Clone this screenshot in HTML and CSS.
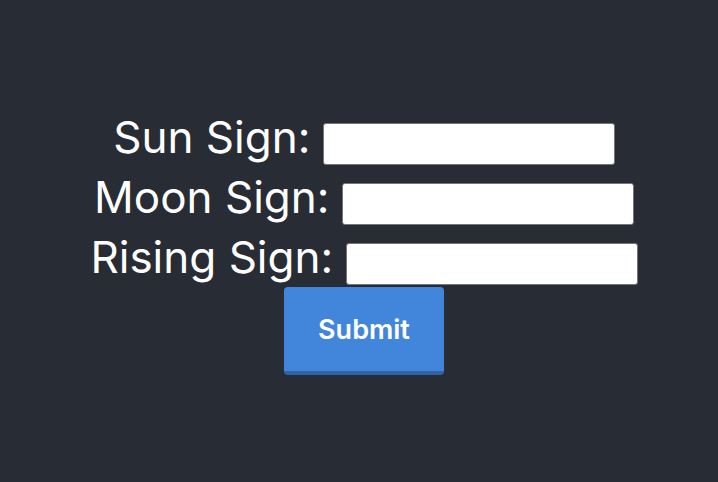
FILE: index.html
```html
<!DOCTYPE html>
<html>
<head>
<meta charset="utf-8">
<link rel="stylesheet" href="styles.css">
</head>
<body>
<div class="app">
  <form class="form">
    <div class="row"><label>Sun Sign: <input type="text"></label></div>
    <div class="row"><label>Moon Sign: <input type="text"></label></div>
    <div class="row"><label>Rising Sign: <input type="text"></label></div>
    <button type="button" class="submit">Submit</button>
  </form>
</div>
</body>
</html>
```
FILE: styles.css
```css
html, body {
  margin: 0;
  padding: 0;
  background: #282c34;
}
.app {
  min-height: 482px;
  display: flex;
  flex-direction: column;
  align-items: center;
  justify-content: center;
  padding-left: 10px;
  box-sizing: border-box;
  font-family: Inter, "Noto Sans", sans-serif;
  color: #ffffff;
}
.form {
  display: flex;
  flex-direction: column;
  align-items: center;
}
.row {
  font-size: 44px;
  line-height: 60px;
  height: 60px;
  white-space: nowrap;
}
.row input {
  width: 292px;
  height: 42px;
  box-sizing: border-box;
  border: 1px solid #767676;
  border-radius: 3px;
  background: #fff;
  vertical-align: 5px;
  margin: 0;
  padding: 0 4px;
}
.submit {
  width: 160px;
  height: 88px;
  background: #4286dc;
  border: none;
  border-bottom: 4px solid #2f64a8;
  border-radius: 4px;
  color: #fff;
  font-family: Inter, "Noto Sans", sans-serif;
  font-weight: 600;
  font-size: 27px;
  cursor: pointer;
}
```
